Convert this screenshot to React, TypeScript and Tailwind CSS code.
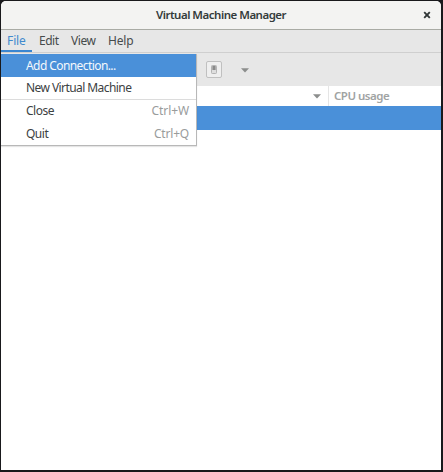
import type { ReactNode } from "react";

function Caret() {
  return (
    <svg width="8" height="5" viewBox="0 0 8 5" className="block">
      <path d="M0 0.3H8L4 4.5Z" fill="#8c8e8d" />
    </svg>
  );
}

function MenuItem({ children, shortcut, active }: { children: ReactNode; shortcut?: ReactNode; active?: boolean }) {
  return (
    <div className={`flex h-[22.5px] items-center justify-between pl-[25px] pr-[7px] ${active ? "bg-[#4a90d9] pt-px text-[#f4f8fc]" : "text-[#3c4142]"}`}>
      {children}
      {shortcut}
    </div>
  );
}

export default function App() {
  return (
    <div className="h-[472px] w-[443px] overflow-hidden bg-[#19191c] pl-px pt-px font-['Noto_Sans','Open_Sans',sans-serif] text-[12px] leading-[16px] whitespace-nowrap">
      <div className="relative flex h-[469px] w-[440px] flex-col overflow-hidden rounded-t-[5px] bg-white">
        <header className="grid h-[29px] shrink-0 grid-cols-[40px_1fr_40px] items-center border-b border-[#a9aba5] bg-[#f3f3f2]">
          <span />
          <h1 className="text-center text-[11.5px] font-semibold text-[#343b3b]"><span className="tracking-[-0.5px]">Virtual Machine Manager</span></h1>
          <svg width="8" height="8" viewBox="0 0 8 8" className="ml-[22px]">
            <path d="M1.2 1.2L6.8 6.8M6.8 1.2L1.2 6.8" stroke="#303637" strokeWidth="1.9" />
          </svg>
        </header>
        <nav className="flex h-[23px] shrink-0 border-b border-[#cfcfcf] bg-[#e7e7e7] text-[#464b4b]">
          <div className="w-[31px] border-b-2 border-[#3a86d1] pl-[6px] pt-[3px] text-[#408ace]"><span className="tracking-[-0.1px]">File</span></div>
          <div className="w-[32px] pl-[7px] pt-[3px]"><span className="tracking-[-0.5px]">Edit</span></div>
          <div className="w-[38px] pl-[7px] pt-[3px]"><span className="tracking-[-0.4px]">View</span></div>
          <div className="pl-[6px] pt-[3px]"><span className="tracking-[-0.2px]">Help</span></div>
        </nav>
        <div className="flex h-[33px] shrink-0 items-center bg-[#e7e7e7] pl-[205px]">
          <div className="flex h-[17px] w-[16px] items-center justify-center rounded-[2px] border border-[#c0c0c0] bg-[#efefef]">
            <svg width="6" height="9" viewBox="0 0 6 9">
              <rect x="0.5" y="0.5" width="5" height="8" rx="0.8" fill="#dedede" stroke="#b4b4b4" />
              <rect x="1.4" y="1" width="3.2" height="4" fill="#8a8a8a" />
            </svg>
          </div>
          <div className="ml-[19px] mt-px"><Caret /></div>
        </div>
        <div className="flex h-5 shrink-0 bg-white">
          <div className="flex w-[328px] items-center justify-end border-r border-[#e5e5e5] pr-[7px]"><Caret /></div>
          <div className="pl-[5px] pt-[2px] text-[11.5px] font-semibold text-[#a0a3a3]"><span className="tracking-[-0.5px]">CPU usage</span></div>
        </div>
        <div className="h-6 shrink-0 bg-[#4a90d9]" />
        <div className="absolute left-0 top-[53px] w-[196px] border-b border-r border-[#b8b8b8] bg-white shadow-[0_1px_1px_#0000001a]">
          <MenuItem active><span className="tracking-[-0.58px]">Add Connection...</span></MenuItem>
          <MenuItem><span className="tracking-[-0.57px]">New Virtual Machine</span></MenuItem>
          <div className="h-px bg-[#dcdcdc]" />
          <MenuItem shortcut={<span className="tracking-[-0.1px] text-[#999c9c]">Ctrl+W</span>}><span className="tracking-[-0.5px]">Close</span></MenuItem>
          <MenuItem shortcut={<span className="tracking-[-0.2px] text-[#999c9c]">Ctrl+Q</span>}><span className="tracking-[-0.5px]">Quit</span></MenuItem>
        </div>
      </div>
    </div>
  );
}
